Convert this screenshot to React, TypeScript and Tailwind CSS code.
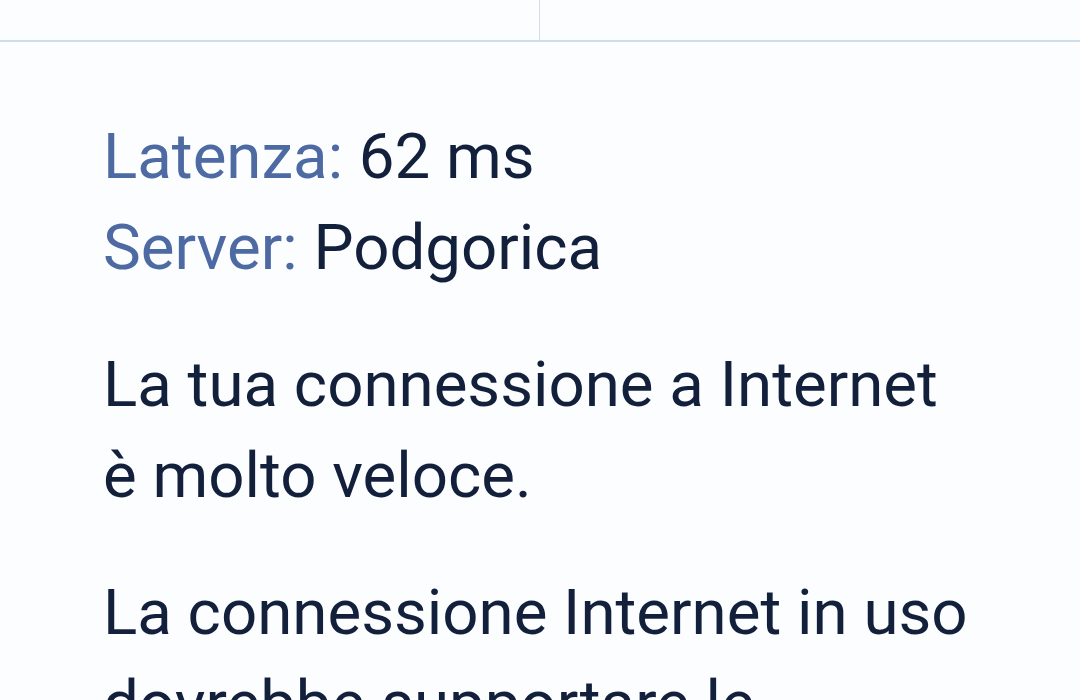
import React from "react";

export default function App() {
  return (
    <div className="w-[1080px] h-[700px] overflow-hidden bg-[#fbfdfe]" style={{ fontFamily: "Roboto, 'Noto Sans', sans-serif" }}>
      <div className="flex h-[42px] border-b-2 border-[#cddfed]">
        <div className="w-[540px] border-r border-[#cfdeea]" />
        <div className="flex-1" />
      </div>
      <div className="pl-[103px] pt-[69px] text-[63.6px] leading-[91px] text-[#13203b]">
        <div>
          <div><span className="text-[#4e6aa3]">Latenza:</span> 62 ms</div>
          <div><span className="text-[#4e6aa3]">Server:</span> Podgorica</div>
        </div>
        <p className="mt-[46px]">La tua connessione a Internet<br />è molto veloce.</p>
        <p className="mt-[46px]">La connessione Internet in uso<br />dovrebbe supportare le</p>
      </div>
    </div>
  );
}
